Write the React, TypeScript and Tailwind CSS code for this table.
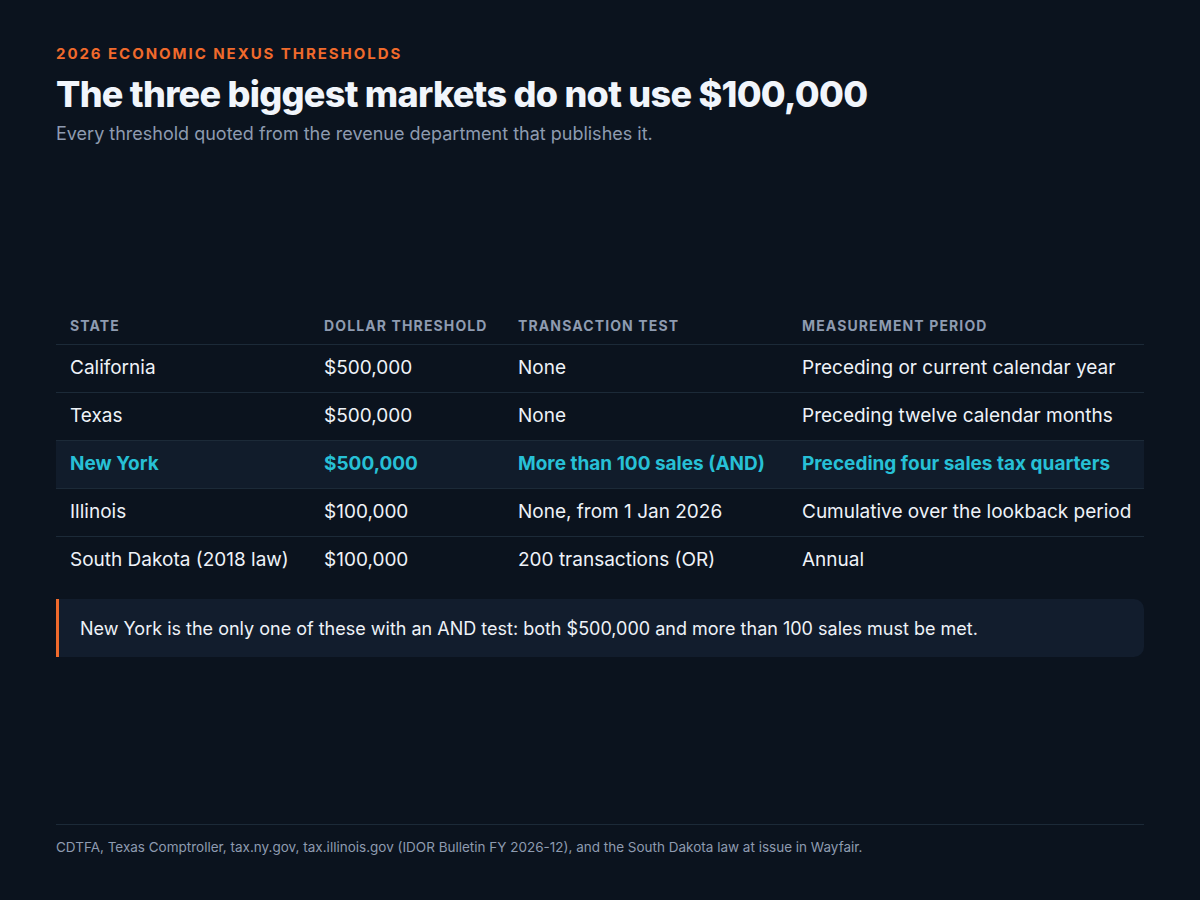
const rows = [
  { state: "California", dollar: "$500,000", test: "None", period: "Preceding or current calendar year" },
  { state: "Texas", dollar: "$500,000", test: "None", period: "Preceding twelve calendar months" },
  { state: "New York", dollar: "$500,000", test: "More than 100 sales (AND)", period: "Preceding four sales tax quarters", hl: true },
  { state: "Illinois", dollar: "$100,000", test: "None, from 1 Jan 2026", period: "Cumulative over the lookback period" },
  { state: "South Dakota (2018 law)", dollar: "$100,000", test: "200 transactions (OR)", period: "Annual" },
];

const App = () => {
  return (
    <div className="w-[1200px] h-[900px] bg-[#0b131e] font-['Inter','Liberation_Sans',sans-serif] px-14 pt-[44px] pb-[43px] flex flex-col">
      <header>
        <p className="text-[#f06a2c] text-[15px] font-bold tracking-[0.13em] uppercase leading-5">
          2026 Economic Nexus Thresholds
        </p>
        <h1 className="text-[#f1f5fb] text-[36px] font-extrabold tracking-[-0.02em] leading-[44px] mt-[8px]">
          The three biggest markets do not use $100,000
        </h1>
        <p className="text-[#8e9bb0] text-[18px] leading-[26px] mt-[5px]">
          Every threshold quoted from the revenue department that publishes it.
        </p>
      </header>

      <main className="flex-1 flex flex-col justify-center pt-[2px]">
        <table className="w-full text-left border-collapse">
          <thead>
            <tr className="border-b border-[#1c2a38]">
              <th className="pl-[14px] pb-[8px] pt-0 w-[268px] text-[14px] font-bold tracking-[0.08em] text-[#8e9bb0] uppercase leading-5">State</th>
              <th className="pb-[8px] w-[194px] text-[14px] font-bold tracking-[0.08em] text-[#8e9bb0] uppercase leading-5">Dollar threshold</th>
              <th className="pb-[8px] w-[284px] text-[14px] font-bold tracking-[0.08em] text-[#8e9bb0] uppercase leading-5">Transaction test</th>
              <th className="pb-[8px] text-[14px] font-bold tracking-[0.08em] text-[#8e9bb0] uppercase leading-5">Measurement period</th>
            </tr>
          </thead>
          <tbody>
            {rows.map((r, i) => {
              const cell = r.hl
                ? "h-[48px] text-[19px] font-bold text-[#27c0d6]"
                : "h-[48px] text-[19px] text-[#eef2f8]";
              return (
                <tr
                  key={r.state}
                  className={`${i < rows.length - 1 ? "border-b border-[#1c2a38]" : ""} ${r.hl ? "bg-[#111c2b]" : ""}`}
                >
                  <td className={`pl-[14px] ${cell}`}>{r.state}</td>
                  <td className={cell}>{r.dollar}</td>
                  <td className={cell}>{r.test}</td>
                  <td className={cell}>{r.period}</td>
                </tr>
              );
            })}
          </tbody>
        </table>

        <div className="mt-[15px] bg-[#121d2d] border-l-[3px] border-[#f06a2c] rounded-r-[10px] h-[58px] flex items-center pl-[21px]">
          <p className="text-[#eef2f8] text-[18px]">
            New York is the only one of these with an AND test: both $500,000 and more than 100 sales must be met.
          </p>
        </div>
      </main>

      <footer className="border-t border-[#1c2a38] pt-[12px]">
        <p className="text-[#8e9bb0] text-[13.5px] leading-5">
          CDTFA, Texas Comptroller, tax.ny.gov, tax.illinois.gov (IDOR Bulletin FY 2026-12), and the South Dakota law at issue in Wayfair.
        </p>
      </footer>
    </div>
  );
};

export default App;
